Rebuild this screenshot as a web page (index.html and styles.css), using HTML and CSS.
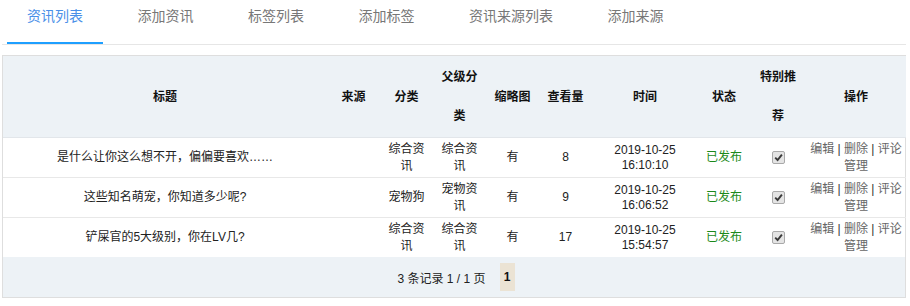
FILE: index.html
```html
<!DOCTYPE html>
<html lang="zh-CN">
<head>
<meta charset="utf-8">
<title>资讯列表</title>
<link rel="stylesheet" href="styles.css">
</head>
<body>
<div class="page">
  <ul class="tabs">
    <li class="tab active">资讯列表</li>
    <li class="tab">添加资讯</li>
    <li class="tab">标签列表</li>
    <li class="tab">添加标签</li>
    <li class="tab">资讯来源列表</li>
    <li class="tab">添加来源</li>
  </ul>
  <div class="box">
    <table class="grid">
      <colgroup>
        <col class="c-title"><col class="c-sm"><col class="c-sm"><col class="c-sm"><col class="c-sm"><col class="c-sm"><col class="c-time"><col class="c-sm2"><col class="c-rec"><col class="c-op">
      </colgroup>
      <thead>
        <tr>
          <th>标题</th><th>来源</th><th>分类</th><th>父级分类</th><th>缩略图</th><th>查看量</th><th>时间</th><th>状态</th><th class="rec">特别推荐</th><th>操作</th>
        </tr>
      </thead>
      <tbody>
        <tr>
          <td>是什么让你这么想不开，偏偏要喜欢……</td><td></td><td>综合资讯</td><td>综合资讯</td><td>有</td><td>8</td><td class="time">2019-10-25<br>16:10:10</td><td class="ok">已发布</td><td><span class="chk" role="checkbox" aria-checked="true" aria-disabled="true"><svg viewBox="0 0 9 9" width="9" height="9"><path d="M1.2 4.6 L3.6 7 L7.9 1.6" fill="none" stroke="#3a3a3a" stroke-width="1.9"/></svg></span></td><td class="op"><a>编辑</a> | <a>删除</a> | <a>评论</a><a>管理</a></td>
        </tr>
        <tr>
          <td>这些知名萌宠，你知道多少呢?</td><td></td><td>宠物狗</td><td>宠物资讯</td><td>有</td><td>9</td><td class="time">2019-10-25<br>16:06:52</td><td class="ok">已发布</td><td><span class="chk" role="checkbox" aria-checked="true" aria-disabled="true"><svg viewBox="0 0 9 9" width="9" height="9"><path d="M1.2 4.6 L3.6 7 L7.9 1.6" fill="none" stroke="#3a3a3a" stroke-width="1.9"/></svg></span></td><td class="op"><a>编辑</a> | <a>删除</a> | <a>评论</a><a>管理</a></td>
        </tr>
        <tr>
          <td>铲屎官的5大级别，你在LV几?</td><td></td><td>综合资讯</td><td>综合资讯</td><td>有</td><td>17</td><td class="time">2019-10-25<br>15:54:57</td><td class="ok">已发布</td><td><span class="chk" role="checkbox" aria-checked="true" aria-disabled="true"><svg viewBox="0 0 9 9" width="9" height="9"><path d="M1.2 4.6 L3.6 7 L7.9 1.6" fill="none" stroke="#3a3a3a" stroke-width="1.9"/></svg></span></td><td class="op"><a>编辑</a> | <a>删除</a> | <a>评论</a><a>管理</a></td>
        </tr>
      </tbody>
    </table>
    <div class="pager">
      <span class="info">3 条记录 1 / 1 页</span>
      <span class="cur">1</span>
    </div>
  </div>
</div>
</body>
</html>
```

FILE: styles.css
```css
html, body {
  margin: 0;
  padding: 0;
  background: #fff;
}
body {
  font-family: "Liberation Sans", "Noto Sans CJK SC", sans-serif;
  font-size: 12px;
  color: #222;
}
.page {
  margin: 0 4px 0 2px;
}
.tabs {
  list-style: none;
  margin: 0;
  padding: 0 0 0 5px;
  display: flex;
  border-bottom: 1px solid #e6e6e6;
}
.tab {
  height: 42px;
  line-height: 32px;
  padding: 0 20px;
  margin-right: 14.5px;
  font-size: 14px;
  color: #777;
  border-bottom: 2px solid transparent;
  white-space: nowrap;
}
.tab.active {
  color: #4a90e8;
  border-bottom-color: #1e9fff;
}
.box {
  margin-top: 10px;
  border: 1px solid #dedede;
}
.grid {
  width: 100%;
  table-layout: fixed;
  border-collapse: collapse;
}
.c-title { width: 324px; }
.c-sm { width: 53px; }
.c-time { width: 106px; }
.c-sm2 { width: 52px; }
.c-rec { width: 56px; }
.c-op { width: 100px; }
.grid th {
  background: #edf2f6;
  font-weight: bold;
  color: #111;
  line-height: 39px;
  padding: 2px 4px 1px;
  text-align: center;
  border-bottom: 1px solid #e2e6ea;
}
.grid th.rec {
  padding-left: 7px;
  padding-right: 7px;
}
.grid td {
  height: 39px;
  padding: 0 4px;
  line-height: 17px;
  text-align: center;
  vertical-align: middle;
  border-bottom: 1px solid #e8e8e8;
  color: #222;
}
.grid tbody tr:last-child td {
  border-bottom: none;
}
.grid td.time {
  line-height: 15px;
}
.grid td.ok {
  color: #1b8a1b;
}
.grid td.op {
  padding: 0 3px;
  color: #333;
}
.op a {
  color: #666;
}
.chk {
  display: inline-flex;
  align-items: center;
  justify-content: center;
  box-sizing: border-box;
  width: 13px;
  height: 13px;
  border: 1px solid #a9a9a9;
  border-radius: 2px;
  background: #e4e4e4;
  vertical-align: middle;
}
.chk svg {
  display: block;
}
.pager {
  background: #edf2f6;
  height: 40px;
  display: flex;
  align-items: center;
  justify-content: center;
  gap: 14px;
  padding-left: 4px;
}
.pager .info {
  color: #222;
}
.pager .cur {
  display: inline-block;
  width: 15px;
  height: 28px;
  line-height: 28px;
  text-align: center;
  background: #ebe3d4;
  font-weight: bold;
  color: #111;
}
```
